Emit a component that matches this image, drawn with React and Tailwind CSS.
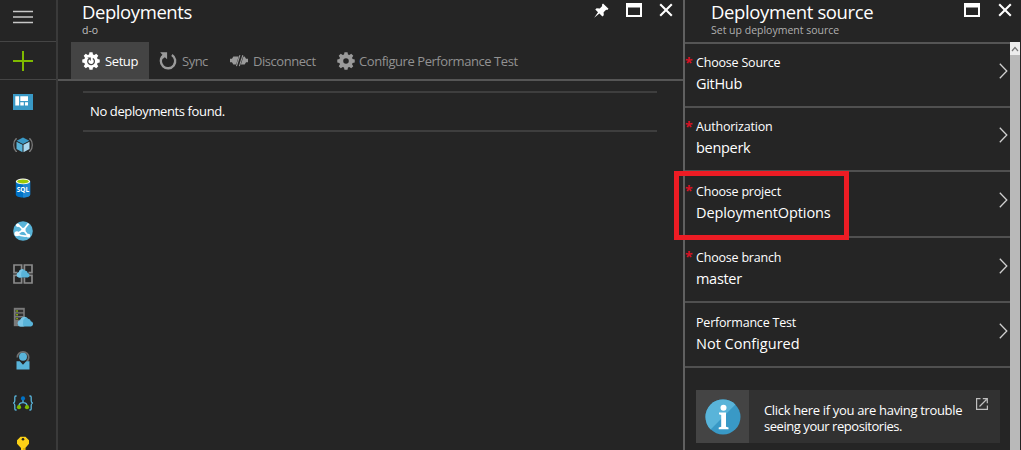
import React from "react";

const Cloud = ({ x = 0, y = 0, s = 1 }) => (
  <g transform={`translate(${x} ${y}) scale(${s})`}>
    <path d="M3.2 10a3.1 3.1 0 0 1-.4-6.1A4.3 4.3 0 0 1 10.6 2.4a3 3 0 0 1 2.7 2.5A2.6 2.6 0 0 1 13.4 10Z" fill="#59b4d9" />
    <path d="M3.2 10a3.1 3.1 0 0 1-.4-6.1A4.3 4.3 0 0 1 8.6 1 5 5 0 0 0 5.7 6 4 4 0 0 0 6.5 10Z" fill="#7ac6e6" />
  </g>
);

const Svg = ({ children, className = "h-5 w-5" }) => (
  <svg viewBox="0 0 20 20" className={className} fill="none">{children}</svg>
);

const Dashboard = () => (
  <Svg>
    <path d="M0 2h20v16H0Z" fill="#3999c6" />
    <path d="M2.3 4.2h3.8v9.2H2.3ZM7.3 4.2H15v4.8H7.3ZM7.3 10.300h3.5v3.100H7.3ZM12 10.300h3v3.100h-3Z" fill="#fff" />
  </Svg>
);

const ResourceGroup = () => (
  <Svg>
    <path d="M4 3.8H3C1.4 5.4.7 7.4.7 10s.7 4.8 2.3 6.4h1M16 3.8h1c1.6 1.6 2.3 3.6 2.3 6.2s-.7 4.8-2.3 6.4h-1" stroke="#7a7a7a" strokeWidth="1.3" />
    <path d="m10 2.6 6.4 3.2L10 9 3.6 5.8Z" fill="#3999c6" />
    <path d="m3.5 6.8 6 3v7.4l-6-3.2Z" fill="#59b4d9" />
    <path d="m16.5 6.8-6 3v7.4l6-3.2Z" fill="#a9d7ee" />
  </Svg>
);

const Sql = () => (
  <Svg>
    <path d="M2.8 3.4v13c0 1.7 3.2 3 7.2 3s7.2-1.3 7.2-3v-13Z" fill="#0072c6" />
    <path d="M10 5v14.4c4 0 7.2-1.3 7.2-3v-13Z" fill="#1e86d2" />
    <ellipse cx="10" cy="3.4" rx="7.2" ry="2.8" fill="#fff" />
    <ellipse cx="10" cy="3.4" rx="5.9" ry="2" fill="#9bc906" />
    <text x="10" y="14.2" textAnchor="middle" fill="#fff" className="font-['Open_Sans',sans-serif] text-[6.5px] font-bold">SQL</text>
  </Svg>
);

const WebApp = () => (
  <Svg>
    <circle cx="10" cy="10" r="9.8" fill="#59b4d9" />
    <path d="M4 3.500c2.500 1.200 4.300 3 6.500 5.500L15.500 15M3.800 13 10.500 8.800 15.500 2.500M3.800 13c3.800 2 7.500 2.500 12 1.700" stroke="#fff" strokeWidth="1.800" />
    <circle cx="3.900" cy="12.800" r="2.500" fill="#fff" />
    <circle cx="10.5" cy="8.900" r="2.200" fill="#fff" />
    <circle cx="15.400" cy="14.700" r="1.900" fill="#fff" />
    <circle cx="4.800" cy="4.300" r="1.800" fill="#fff" />
  </Svg>
);

const CloudService = () => (
  <Svg>
    <path d="M8.600 1H1v7.600h7.600ZM19 1h-7.600v7.600H19ZM8.600 11.400H1V19h7.600ZM19 11.400h-7.600V19H19Z" stroke="#8a8a8a" strokeWidth="1.700" />
    <path d="M4.500 7h11v6.500h-11Z" fill="#252525" />
    <Cloud x={3.3} y={4.8} s={0.86} />
  </Svg>
);

const Server = () => (
  <Svg>
    <path d="M.8.8h11v18.4H.8Z" fill="#7a7a7a" />
    <path d="M2.5 2.8h7.7v2.4H2.5ZM2.5 6.6h7.7V9H2.5ZM2.5 10.4h7.7v2.4H2.5Z" fill="#303030" />
    <path d="M3.3 3.3h1.5v1.4H3.3ZM3.3 7.1h1.5v1.4H3.3ZM3.3 10.9h1.5v1.4H3.3Z" fill="#9bc906" />
    <Cloud x={4.3} y={9.300} s={1.02} />
  </Svg>
);

const Monitor = () => (
  <Svg>
    <path d="M4.300 7.500a5.700 5.700 0 0 1 11.400 0c0 1.700-.7 3-1.800 3.900" stroke="#707070" strokeWidth="1.700" />
    <circle cx="10" cy="6.700" r="4" fill="#59b4d9" />
    <path d="M3.500 11.200h3.300l3.200 3.500 3.200-3.500h3.300v8.300h-13Z" fill="#59b4d9" />
  </Svg>
);

const LogicApp = () => (
  <Svg>
    <path d="M3.6 3H2.8c-.8 0-1 .5-1 1.300v3.200c0 1.300-.3 2-1.300 2.500 1 .5 1.300 1.200 1.300 2.500v3.200c0 .8.2 1.300 1 1.300h.8M16.400 3h.8c.8 0 1 .5 1 1.300v3.200c0 1.300.3 2 1.300 2.500-1 .5-1.300 1.200-1.300 2.500v3.200c0 .8-.2 1.300-1 1.300h-.8" stroke="#59b4d9" strokeWidth="1.300" />
    <path d="M10 6v3.500M6 13c0-2.400 1.400-3.400 4-3.400s4 1 4 3.400" stroke="#59b4d9" strokeWidth="1.400" />
    <circle cx="10" cy="5.400" r="2.100" fill="#0072c6" />
    <circle cx="6" cy="14.200" r="2.100" fill="#7fba00" />
    <circle cx="14" cy="14.200" r="2.100" fill="#7fba00" />
  </Svg>
);

const KeyIcon = () => (
  <Svg>
    <path d="M7.500.8h5L16 4.200v3.500L12.300 12v8H8v-8L4 7.700V4.200Z" fill="#fcd116" />
    <path d="M10 12h2.300v8H10Z" fill="#e5b400" />
    <circle cx="10" cy="3.200" r="1.300" fill="#252525" />
  </Svg>
);

const GEAR = "M8.3.4h3.4l.5 2.4 1.5.6 2.1-1.4 2.3 2.3-1.4 2.1.6 1.5 2.4.5v3.3l-2.4.5-.6 1.5 1.4 2.1-2.3 2.3-2.1-1.4-1.5.6-.5 2.4H8.3l-.5-2.4-1.5-.6-2.1 1.4-2.3-2.3 1.4-2.1-.6-1.5-2.4-.5V8.4l2.4-.5.6-1.5-1.4-2.1 2.3-2.3 2.1 1.4 1.500-.6Z";

const SetupIcon = () => (
  <Svg className="h-[18px] w-[18px]">
    <path d={GEAR} fill="#fff" />
    <path d="M12 7.200a3.700 3.700 0 1 1-4.500.5" stroke="#444" strokeWidth="1.400" />
    <path d="M6 6.200h3.800V10Z" fill="#444" />
  </Svg>
);

const GearIcon = () => (
  <Svg className="h-[18px] w-[18px]">
    <path d={GEAR} fill="#9a9a9a" />
    <circle cx="10" cy="10" r="3.100" fill="#252525" />
  </Svg>
);

const SyncIcon = () => (
  <Svg className="h-[18px] w-[18px]">
    <path d="M14.300 3.300a8 8 0 1 1-9.600.8" stroke="#9a9a9a" strokeWidth="2.600" />
    <path d="M1.300.4H9v7.700L6.500 5.700 4 7.800 1.800 5.400 4 3.200Z" fill="#9a9a9a" />
  </Svg>
);

const DisconnectIcon = () => (
  <Svg className="h-[18px] w-[18px]">
    <path d="M0 7.500h2.200l1.500-2.500h6.600L7.400 14H3.700l-1.500-2.500H0ZM13 5h3.300l1.500 2.500H20v4h-2.200L16.300 14H10.200Z" fill="#9a9a9a" />
    <path d="M11.400 3.200 7.400 15.800M14.300 3.200l-4 12.600" stroke="#252525" strokeWidth="2.300" />
    <path d="M11 3.400 7.200 15.600M14.300 3.400l-3.900 12.200" stroke="#9a9a9a" strokeWidth="1.200" />
  </Svg>
);

const Maximize = () => (
  <svg viewBox="0 0 16 14" className="h-[14px] w-4">
    <path d="M0 0h16v14H0ZM2 4.500V12h12V4.500Z" fill="#fff" fillRule="evenodd" />
  </svg>
);

const Close = () => (
  <svg viewBox="0 0 14 14" className="h-[14px] w-[14px]">
    <path d="m1.200 1.200 11.600 11.600M12.800 1.200 1.200 12.800" stroke="#fff" strokeWidth="2.100" />
  </svg>
);

const Pin = () => (
  <svg viewBox="0 0 15 15" className="h-[15px] w-[15px]">
    <path d="m9 .5 5.500 5.300-1.200 1.200-1.200-.3-2.500 2.500.2 3-1.400 1.300L5.400 10.500.2 14.800 4 9.200 1.300 6.500l1.300-1.300 3.200.2L8.200 3 7.900 1.700Z" fill="#fff" />
  </svg>
);

const Row = ({ label, value, required, height, highlighted, pad = "pt-2.5", tracking = "tracking-[-0.3px]" }) => (
  <div className={`relative flex shrink-0 border-b-2 border-[#505050] ${height}`}>
    <div className="flex w-[11px] shrink-0 pt-[11px] text-[14px] leading-4 font-bold text-[#d81123]">{required ? "*" : ""}</div>
    <div className={`min-w-0 flex-1 whitespace-nowrap text-white ${pad}`}>
      <div className="text-[12.5px] leading-5 tracking-[-0.2px]">{label}</div>
      <div className={`text-[14.5px] leading-[21px] ${tracking}`}>{value}</div>
    </div>
    <div className="flex w-[11px] items-center pb-2">
      <svg viewBox="0 0 9 16" className="h-4 w-[9px]">
        <path d="m.8.8 7 7.200-7 7.200" fill="none" stroke="#d0d0d0" strokeWidth="1.300" />
      </svg>
    </div>
    {highlighted && <div className="absolute -top-px -left-[11px] z-10 h-[69px] w-[175px] border-[5px] border-[#ed1c24]" />}
  </div>
);

const rail = [Dashboard, ResourceGroup, Sql, WebApp, CloudService, Server, Monitor, LogicApp, KeyIcon];

export default function App() {
  return (
    <div className="flex h-[450px] w-[1021px] overflow-hidden bg-[#252525] font-['Open_Sans','Noto_Sans',sans-serif] text-white">
      <nav className="flex w-[58px] shrink-0 flex-col border-r-2 border-[#3a3a3a]">
        <div className="flex h-[42px] shrink-0 flex-col border-b border-[#454545] pt-2.5 pl-[13px]">
          <svg viewBox="0 0 20 14" className="h-[14px] w-5">
            <path d="M0 1.500h20M0 7h20M0 12.500h20" stroke="#c8c8c8" strokeWidth="1.700" />
          </svg>
        </div>
        <div className="flex h-[38px] shrink-0 border-b border-[#454545] pt-[9px] pl-[13px]">
          <svg viewBox="0 0 20 20" className="h-5 w-5">
            <path d="M0 10h20M10 0v20" stroke="#7fba00" strokeWidth="2" />
          </svg>
        </div>
        <div className="flex flex-col gap-[23px] pt-3 pl-[13px]">
          {rail.map((Icon, i) => <Icon key={i} />)}
        </div>
      </nav>

      <main className="flex w-[625px] shrink-0 flex-col">
        <header className="flex h-[42px] shrink-0 justify-between pr-2.5 pl-6">
          <div className="whitespace-nowrap">
            <h1 className="text-[18.5px] leading-[23px] tracking-[-0.42px]">Deployments</h1>
            <div className="text-[10.5px] leading-[14px] text-[#c0c0c0]">d-o</div>
          </div>
          <div className="flex items-start gap-[17px] pt-[3px]">
            <Pin /><Maximize /><Close />
          </div>
        </header>
        <div className="flex h-[39px] shrink-0 border-b-2 border-[#555] pl-[13px] text-[13px] whitespace-nowrap text-[#929292]">
          <div className="flex w-[78px] items-center gap-[5px] bg-[#444] pl-[11px] text-white"><SetupIcon /><span className="pt-0.5 tracking-[-0.4px]">Setup</span></div>
          <div className="flex w-[71px] items-center gap-[5px] pl-[10px]"><SyncIcon /><span className="pt-0.5 tracking-[-0.5px]">Sync</span></div>
          <div className="flex w-[106px] items-center gap-[5px] pl-[10px]"><DisconnectIcon /><span className="pt-0.5 tracking-[-0.45px]">Disconnect</span></div>
          <div className="flex items-center gap-1 pl-[11px]"><GearIcon /><span className="pt-0.5 tracking-[-0.44px]">Configure Performance Test</span></div>
        </div>
        <div className="mt-[10px] ml-[25px] flex h-[41px] w-[574px] items-center border-y-2 border-[#3e3e3e] pt-px pl-[7px] text-[13px] tracking-[-0.38px]">
          No deployments found.
        </div>
      </main>

      <aside className="flex w-[338px] shrink-0 flex-col border-l-2 border-[#606060]">
        <header className="flex h-[42px] shrink-0 justify-between pr-[9px] pl-[26px]">
          <div className="whitespace-nowrap">
            <h2 className="text-[18.5px] leading-[23px] tracking-[-0.37px]">Deployment source</h2>
            <div className="text-[10.5px] leading-[14px] text-[#b0b0b0]">Set up deployment source</div>
          </div>
          <div className="flex items-start gap-[18px] pt-[3px]">
            <Maximize /><Close />
          </div>
        </header>
        <div className="flex min-h-0 flex-1">
          <div className="flex w-[325px] flex-col border-t-2 border-[#555]">
            <Row label="Choose Source" value="GitHub" required height="h-[64px]" pad="pt-[9px]" />
            <Row label="Authorization" value="benperk" required height="h-[64px]" pad="pt-[9px]" />
            <Row label="Choose project" value="DeploymentOptions" required highlighted height="h-[66px]" tracking="tracking-[-0.1px]" />
            <Row label="Choose branch" value="master" required height="h-[65px]" />
            <Row label="Performance Test" value="Not Configured" height="h-[65px]" tracking="tracking-[0px]" />
            <div className="mt-[22px] ml-[11px] flex h-[53px] w-[304px] shrink-0 bg-[#313131]">
              <div className="flex w-[53px] items-center justify-center bg-[#444]">
                <svg viewBox="0 0 36 36" className="h-[36px] w-[36px]">
                  <circle cx="18" cy="18" r="17.500" fill="#3999c6" />
                  <path d="M5.600 30.400A17.500 17.500 0 0 1 30.400 5.600Z" fill="#59b4d9" />
                  <circle cx="18.500" cy="8.700" r="3" fill="#fff" />
                  <path d="M14 13.500h7v14.200l2.500.8v1.700H13.700v-1.700l2.500-.8V16l-2.200-.8Z" fill="#fff" />
                </svg>
              </div>
              <div className="w-[217px] pt-[12px] pl-[15px] text-[13px] leading-4 tracking-[-0.33px] whitespace-nowrap">
                Click here if you are having trouble<br /><span className="tracking-[-0.45px]">seeing your repositories.</span>
              </div>
              <svg viewBox="0 0 12 12" className="mt-[8px] ml-[10px] h-3 w-3" fill="none" stroke="#c0c0c0">
                <path d="M4.500.6H.6v10.800h10.800V7.500M3.500 8.500l7-7M6.800.7h4.500v4.500" strokeWidth="1.200" />
              </svg>
            </div>
          </div>
          <div className="flex w-[10px] flex-col bg-[#b9b9b9]">
            <div className="flex h-[13px] items-center justify-center bg-[#ececec]">
              <svg viewBox="0 0 8 6" className="h-1.5 w-2"><path d="m1 5 3-3.500L7 5" fill="none" stroke="#777" strokeWidth="1.200" /></svg>
            </div>
          </div>
        </div>
      </aside>
    </div>
  );
}
